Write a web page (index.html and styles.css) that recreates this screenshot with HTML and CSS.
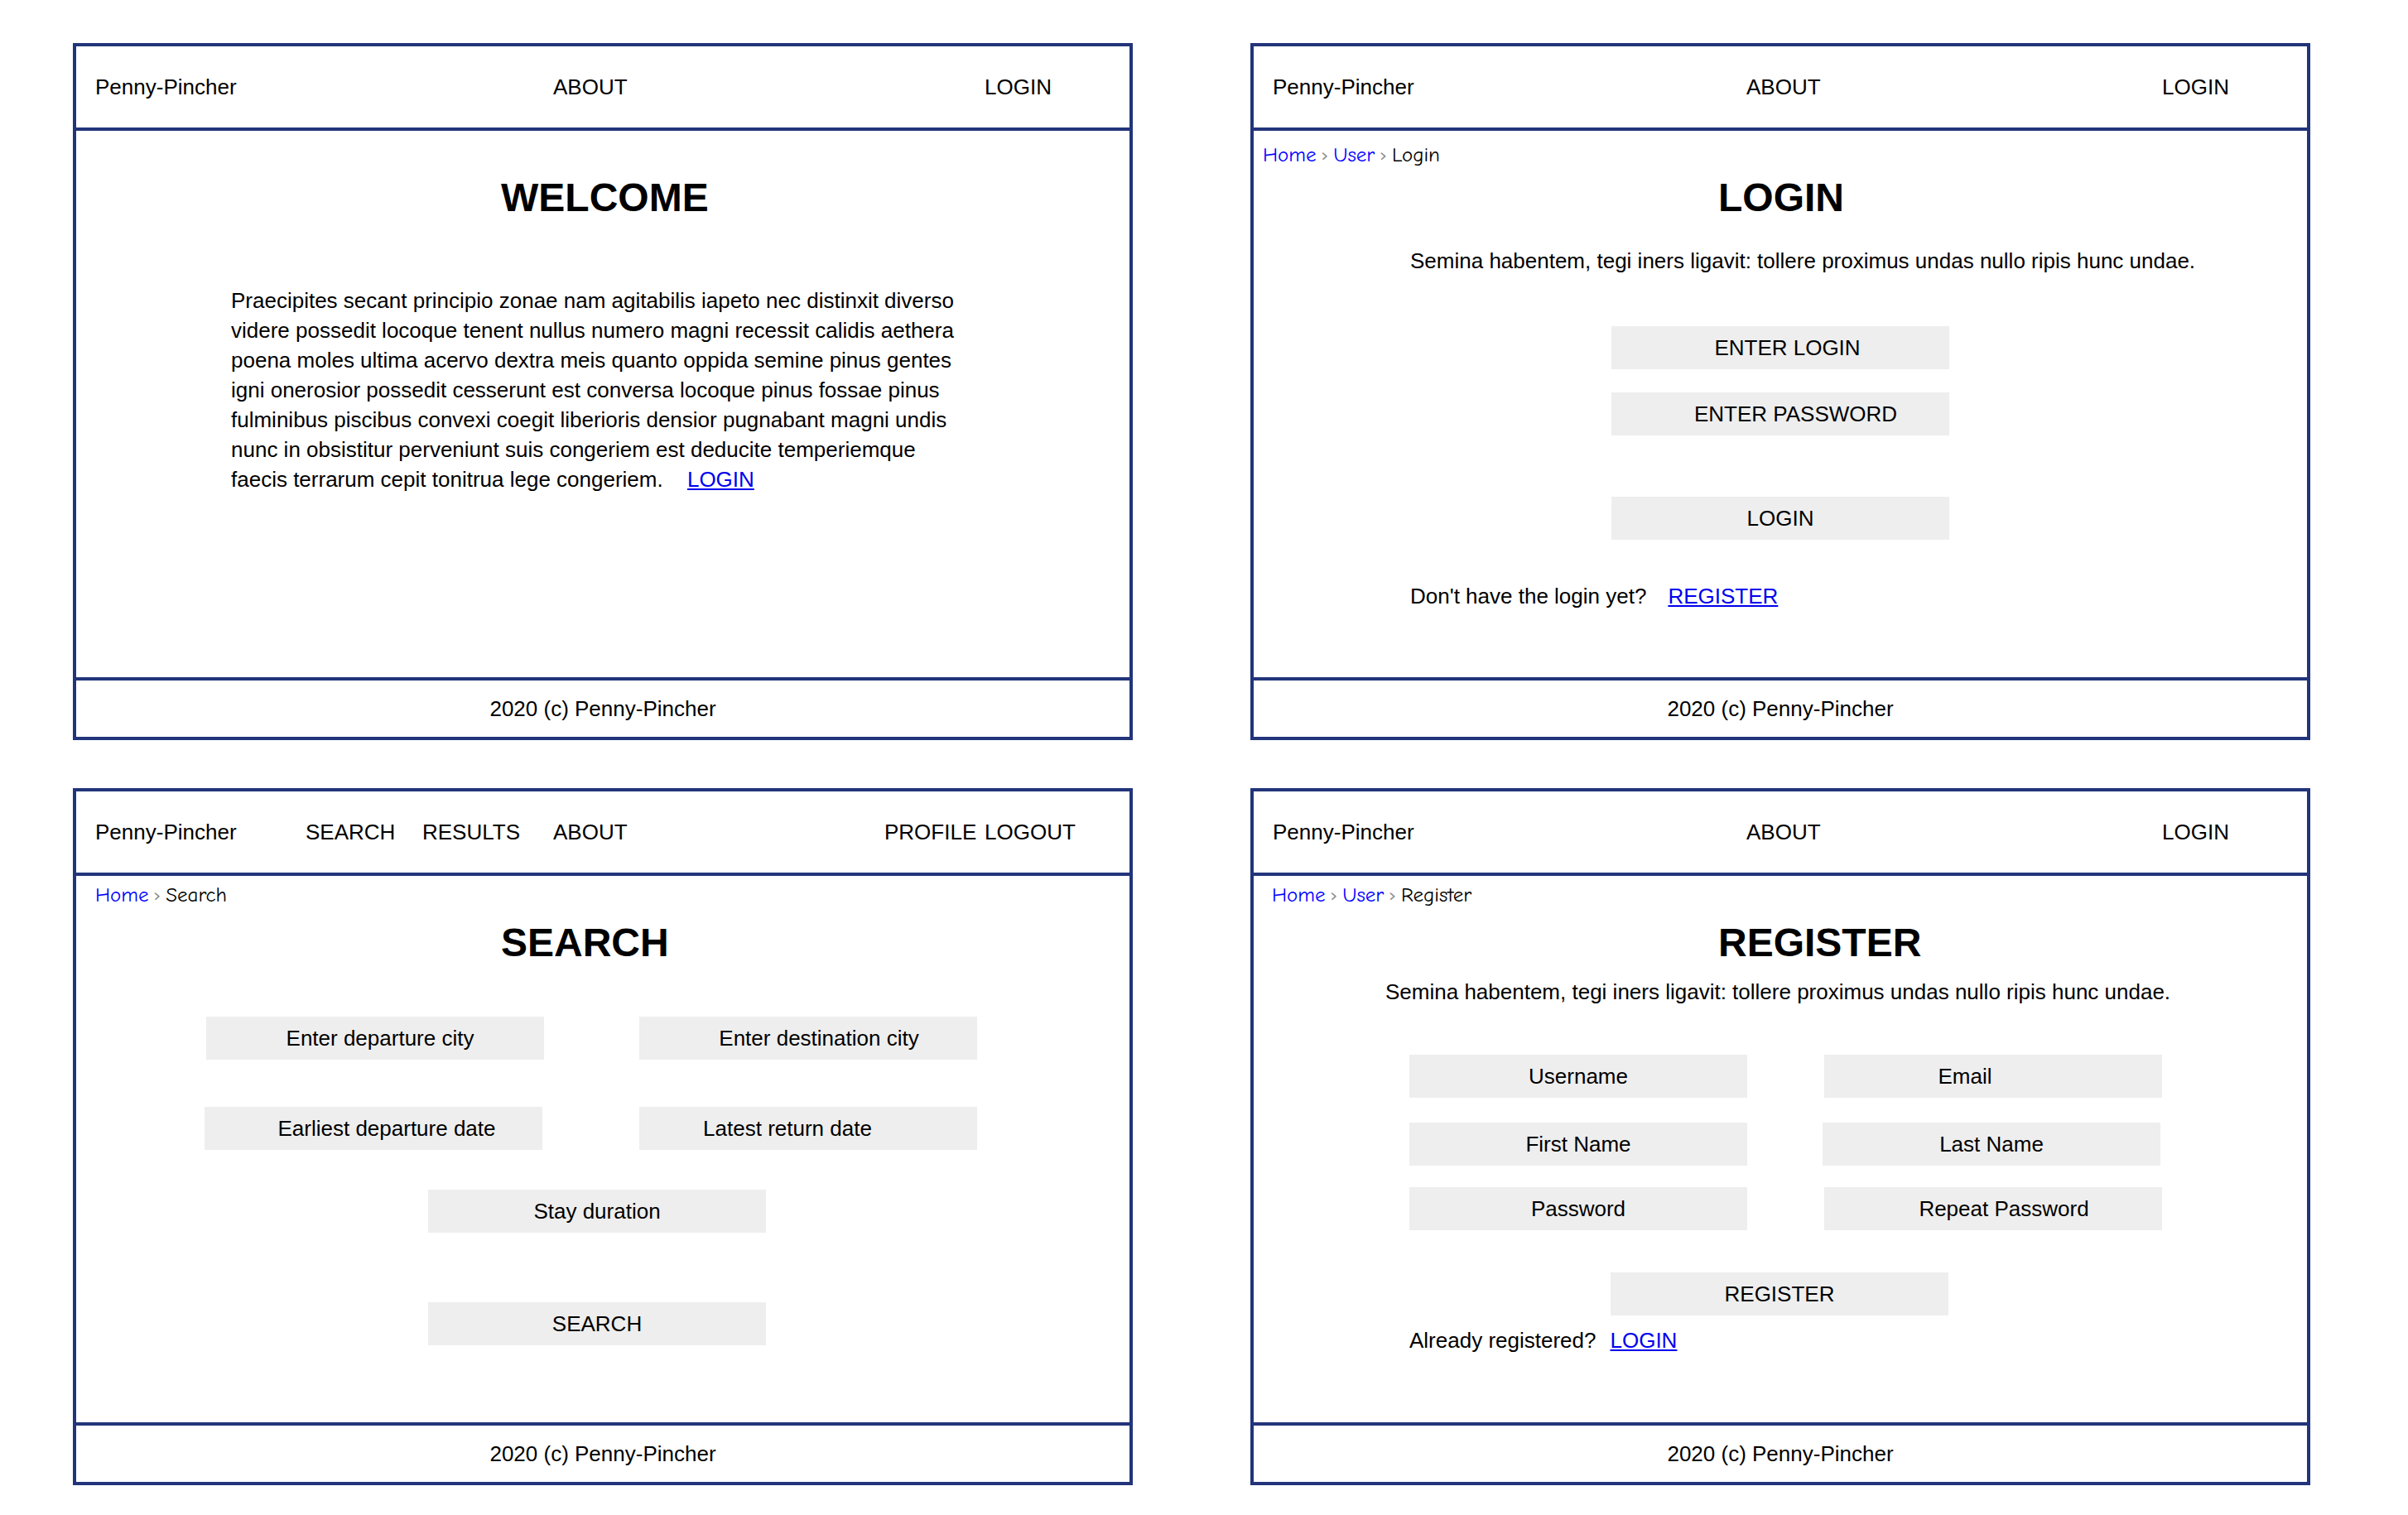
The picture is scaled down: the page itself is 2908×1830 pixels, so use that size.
FILE: index.html
```html
<!DOCTYPE html>
<html lang="en">
<head>
<meta charset="utf-8">
<title>Penny-Pincher wireframes</title>
<link rel="stylesheet" href="styles.css">
</head>
<body>
<div class="board">

  <section class="panel">
    <header class="hdr hdr-a">
      <span>Penny-Pincher</span><span>ABOUT</span><span>LOGIN</span>
    </header>
    <main class="pbody welcome">
      <h1 class="title">WELCOME</h1>
      <p class="para">Praecipites secant principio zonae nam agitabilis iapeto nec distinxit diverso videre possedit locoque tenent nullus numero magni recessit calidis aethera poena moles ultima acervo dextra meis quanto oppida semine pinus gentes igni onerosior possedit cesserunt est conversa locoque pinus fossae pinus fulminibus piscibus convexi coegit liberioris densior pugnabant magni undis nunc in obsistitur perveniunt suis congeriem est deducite temperiemque faecis terrarum cepit tonitrua lege congeriem. <a class="link link-wide" href="#">LOGIN</a></p>
    </main>
    <footer class="ftr">2020 (c) Penny-Pincher</footer>
  </section>

  <section class="panel">
    <header class="hdr hdr-b">
      <span>Penny-Pincher</span><span>ABOUT</span><span>LOGIN</span>
    </header>
    <main class="pbody login">
      <nav class="crumbs"><a href="#">Home</a><i>›</i><a href="#">User</a><i>›</i><span>Login</span></nav>
      <h1 class="title">LOGIN</h1>
      <p class="sub">Semina habentem, tegi iners ligavit: tollere proximus undas nullo ripis hunc undae.</p>
      <div class="field f-login1">ENTER LOGIN</div>
      <div class="field f-login2">ENTER PASSWORD</div>
      <div class="field f-login3">LOGIN</div>
      <p class="note">Don't have the login yet?<a class="link link-reg" href="#">REGISTER</a></p>
    </main>
    <footer class="ftr">2020 (c) Penny-Pincher</footer>
  </section>

  <section class="panel">
    <header class="hdr hdr-c">
      <span>Penny-Pincher</span><span>SEARCH</span><span>RESULTS</span><span>ABOUT</span><span>PROFILE</span><span>LOGOUT</span>
    </header>
    <main class="pbody search">
      <nav class="crumbs"><a href="#">Home</a><i>›</i><span>Search</span></nav>
      <h1 class="title">SEARCH</h1>
      <div class="row row-s1">
        <div class="field sh-r1">Enter departure city</div>
        <div class="field sh-r2">Enter destination city</div>
      </div>
      <div class="row row-s2">
        <div class="field sh-r3">Earliest departure date</div>
        <div class="field sh-l4">Latest return date</div>
      </div>
      <div class="field f-stay">Stay duration</div>
      <div class="field f-go">SEARCH</div>
    </main>
    <footer class="ftr">2020 (c) Penny-Pincher</footer>
  </section>

  <section class="panel">
    <header class="hdr hdr-b">
      <span>Penny-Pincher</span><span>ABOUT</span><span>LOGIN</span>
    </header>
    <main class="pbody register">
      <nav class="crumbs"><a href="#">Home</a><i>›</i><a href="#">User</a><i>›</i><span>Register</span></nav>
      <h1 class="title">REGISTER</h1>
      <p class="sub">Semina habentem, tegi iners ligavit: tollere proximus undas nullo ripis hunc undae.</p>
      <div class="row row-r1">
        <div class="field">Username</div>
        <div class="field sh-l5">Email</div>
      </div>
      <div class="row row-r2">
        <div class="field">First Name</div>
        <div class="field">Last Name</div>
      </div>
      <div class="row row-r3">
        <div class="field">Password</div>
        <div class="field sh-r2">Repeat Password</div>
      </div>
      <div class="field f-reg">REGISTER</div>
      <p class="note note-reg">Already registered?<a class="link link-log" href="#">LOGIN</a></p>
    </main>
    <footer class="ftr">2020 (c) Penny-Pincher</footer>
  </section>

</div>
</body>
</html>
```

FILE: styles.css
```css
html, body {
  margin: 0;
  padding: 0;
  background: #ffffff;
}

body {
  font-family: "Liberation Sans", Arial, sans-serif;
  font-size: 26px;
  color: #000000;
}

.board {
  display: grid;
  grid-template-columns: 1280px 1280px;
  grid-auto-rows: 842px;
  column-gap: 142px;
  row-gap: 58px;
  padding: 52px 0 0 88px;
}

.panel {
  box-sizing: border-box;
  border: 4px solid #22347a;
  display: flex;
  flex-direction: column;
  height: 842px;
}

/* header */
.hdr {
  box-sizing: border-box;
  height: 102px;
  border-bottom: 4px solid #22347a;
  display: grid;
  align-items: center;
  padding-left: 23px;
  white-space: nowrap;
}

.hdr-a { grid-template-columns: 553px 521px auto; }
.hdr-b { grid-template-columns: 572px 502px auto; }
.hdr-c { grid-template-columns: 254px 141px 158px 400px 121px auto; }

/* footer */
.ftr {
  box-sizing: border-box;
  height: 72px;
  border-top: 4px solid #22347a;
  display: flex;
  align-items: center;
  justify-content: center;
}

/* body */
.pbody {
  flex: 1;
  display: flex;
  flex-direction: column;
  align-items: flex-start;
}

.title {
  margin: 0;
  font-size: 48px;
  line-height: 56px;
  font-weight: 700;
}

.para {
  margin: 0;
  line-height: 36px;
  width: 890px;
}

.sub, .note {
  margin: 0;
  line-height: 36px;
  white-space: nowrap;
}

.link {
  color: #0000ee;
  text-decoration: underline;
}

.link-wide { padding-left: 22px; }
.link-reg { margin-left: 26px; }
.link-log { margin-left: 17px; }

.crumbs {
  font-family: "Comic Neue", "Comic Sans MS", "Noto Sans", sans-serif;
  font-size: 25px;
  line-height: 30px;
  white-space: nowrap;
}

.crumbs a {
  color: #0000ff;
  text-decoration: none;
}

.crumbs i {
  font-style: normal;
  color: #8a8a8a;
  margin: 0 6px;
}

.field {
  box-sizing: border-box;
  width: 408px;
  height: 52px;
  background: #eeeeee;
  display: flex;
  align-items: center;
  justify-content: center;
  white-space: nowrap;
}

.row {
  display: flex;
}

/* small text offsets inside boxes */
.sh-r1 { padding-left: 12px; }
.sh-r2 { padding-left: 26px; }
.sh-r3 { padding-left: 32px; }
.sh-l4 { padding-right: 50px; }
.sh-l5 { padding-right: 68px; }

/* welcome */
.welcome { padding-top: 53px; }
.welcome .title { margin-left: 513px; }
.welcome .para { margin: 78px 0 0 187px; }

/* login */
.login { padding: 14px 0 0 11px; }
.login .title { margin: 9px 0 0 550px; }
.login .sub { margin: 30px 0 0 178px; }
.f-login1 { margin: 61px 0 0 421px; padding-left: 17px; }
.f-login2 { margin: 28px 0 0 421px; padding-left: 37px; }
.f-login3 { margin: 74px 0 0 421px; }
.login .note { margin: 50px 0 0 178px; }

/* search */
.search { padding: 8px 0 0 23px; }
.search .title { margin: 15px 0 0 490px; }
.row-s1 { margin: 61px 0 0 134px; gap: 115px; }
.row-s2 { margin: 57px 0 0 132px; gap: 117px; }
.f-stay { margin: 48px 0 0 402px; }
.f-go { margin: 84px 0 0 402px; }

/* register */
.register { padding: 8px 0 0 22px; }
.register .title { margin: 15px 0 0 539px; }
.register .sub { margin: 13px 0 0 137px; }
.row-r1 { margin: 58px 0 0 166px; gap: 93px; }
.row-r2 { margin: 30px 0 0 166px; gap: 91px; }
.row-r3 { margin: 26px 0 0 166px; gap: 93px; }
.f-reg { margin: 51px 0 0 409px; }
.note-reg { margin: 12px 0 0 166px; }
```
